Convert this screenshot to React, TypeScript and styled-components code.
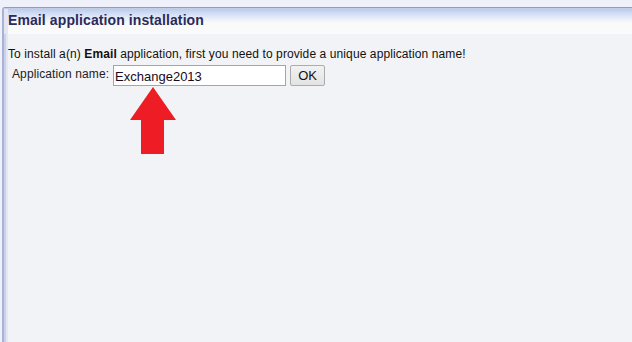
import React from "react";
import styled, { createGlobalStyle } from "styled-components";

const Global = createGlobalStyle`
  html, body { margin: 0; padding: 0; background: #eef0fa; }
  body { font-family: "Liberation Sans", Arial, sans-serif; }
`;

const Page = styled.div`
  width: 632px;
  height: 342px;
  box-sizing: border-box;
  padding: 7px 0 0 2px;
  background: #eef0fa;
  overflow: hidden;
`;

const Panel = styled.div`
  height: 100%;
  box-sizing: border-box;
  border-top: 1px solid #8e9aca;
  border-left: 2px solid #a9b2d6;
  border-top-left-radius: 3px;
  background: #f2f3f7;
  box-shadow: inset 2px 0 0 #cbd1ea, inset 4px 0 0 #e4e7f3;
  display: flex;
  flex-direction: column;
`;

const Header = styled.div`
  height: 26px;
  box-sizing: border-box;
  padding: 3px 0 0 4px;
  border-top: 1px solid #c5cce8;
  background: linear-gradient(to bottom, #bacbef 0px, #d9e3f6 6px, #f6f8fc 13px, #fafafa 14px, #fafafa 100%);
  font-weight: bold;
  font-size: 14px;
  letter-spacing: 0.1px;
  color: #2a2a5c;
  box-shadow: inset 4px 0 0 #e4e7f3;
`;

const Body = styled.div`
  padding: 13px 0 0 4px;
  display: flex;
  flex-direction: column;
  gap: 4px;
`;

const Intro = styled.div`
  font-size: 12px;
  letter-spacing: 0.1px;
  color: #111;
  line-height: 14px;
`;

const FormRow = styled.div`
  display: flex;
  align-items: flex-start;
  padding-left: 4px;
`;

const Label = styled.label`
  font-size: 12px;
  letter-spacing: 0.1px;
  color: #222;
  line-height: 14px;
  padding-top: 2px;
  margin-right: 4px;
`;

const FieldColumn = styled.div`
  display: flex;
  flex-direction: column;
  align-items: flex-start;
`;

const Input = styled.input`
  width: 173px;
  height: 21px;
  box-sizing: border-box;
  border: 1px solid #a5a5a5;
  background: #fff;
  padding: 1px 1px 0;
  font-family: "Liberation Sans", Arial, sans-serif;
  font-size: 13px;
  color: #1a0820;
  outline: none;
`;

const Button = styled.button`
  margin-left: 4px;
  width: 35px;
  height: 21px;
  box-sizing: border-box;
  border: 1px solid #acacac;
  border-radius: 2px;
  background: linear-gradient(to bottom, #f2f2f2, #e3e3e3);
  font-family: "Liberation Sans", Arial, sans-serif;
  font-size: 13px;
  color: #111;
  padding: 0;
`;

const Arrow = styled.svg`
  display: block;
  margin-left: 16px;
  margin-top: 1px;
`;

export default function App() {
  return (
    <>
      <Global />
      <Page>
        <Panel>
          <Header>Email application installation</Header>
          <Body>
            <Intro>
              To install a(n) <b>Email</b> application, first you need to provide a unique application name!
            </Intro>
            <FormRow>
              <Label>Application name:</Label>
              <FieldColumn>
                <Input defaultValue="Exchange2013" />
                <Arrow width="48" height="67" viewBox="0 0 48 67">
                  <polygon points="24,0 47,33 35,33 35,67 12,67 12,33 1,33" fill="#ee1c25" />
                </Arrow>
              </FieldColumn>
              <Button>OK</Button>
            </FormRow>
          </Body>
        </Panel>
      </Page>
    </>
  );
}
